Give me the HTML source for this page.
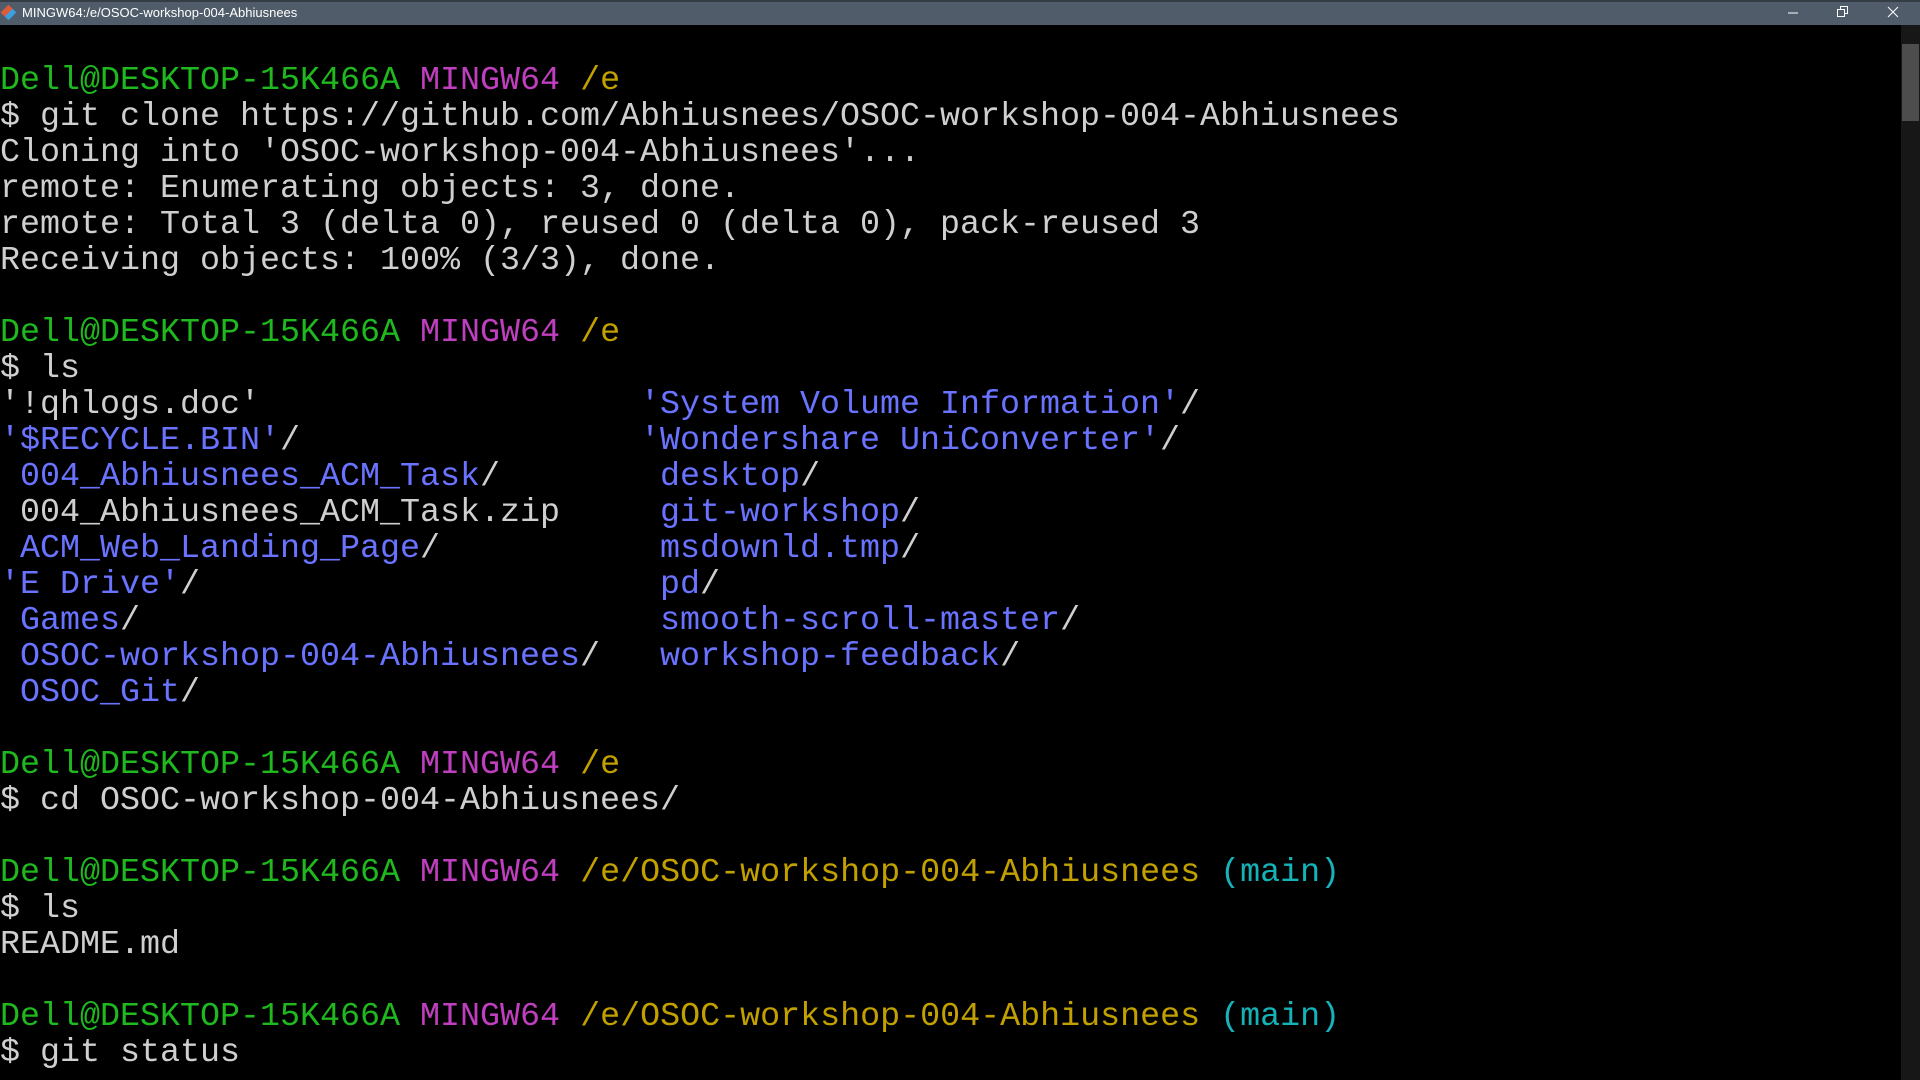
<!DOCTYPE html>
<html><head><meta charset="utf-8"><style>
html,body{margin:0;padding:0;background:#000;width:1920px;height:1080px;overflow:hidden}
#tb{position:absolute;left:0;top:0;width:1920px;height:25px;background:#505c6a;border-top:2px solid #343c46;box-sizing:border-box}
#tb .t{position:absolute;left:22px;top:3px;font:13px "Liberation Sans",sans-serif;color:#fff}
#tb .ic{position:absolute;left:3px;top:5px;width:11px;height:11px;transform:rotate(45deg);background:linear-gradient(90deg,#e05a3a 50%,#3aa0e0 50%)}
#scroll{position:absolute;left:1901px;top:25px;width:19px;height:1055px;background:#171717}
#thumb{position:absolute;left:1902px;top:44px;width:17px;height:77px;background:#4d4d4d}
pre{position:absolute;left:0;top:27px;margin:0;font-family:"Liberation Mono",monospace;font-size:33.35px;line-height:36px;color:#cfcfcf}
.g{color:#1fb81f}.m{color:#bf3fbf}.y{color:#c2a000}.b{color:#6a73ff}.c{color:#15b3b8}
</style></head><body>
<div id="tb"><div class="ic"></div><div class="t">MINGW64:/e/OSOC-workshop-004-Abhiusnees</div>
<svg style="position:absolute;left:1788px;top:6px" width="10" height="10"><line x1="0" y1="5" x2="10" y2="5" stroke="#fff"/></svg>
<svg style="position:absolute;left:1837px;top:4px" width="12" height="12" fill="none" stroke="#fff"><rect x="0.5" y="3.5" width="7" height="7"/><path d="M3.5 3.5V0.5H10.5V7.5H7.5"/></svg>
<svg style="position:absolute;left:1887px;top:4px" width="12" height="12" stroke="#fff"><path d="M1 1L11 11M11 1L1 11"/></svg>
</div>
<div id="scroll"></div><div id="thumb"></div>
<pre>

<span class="g">Dell@DESKTOP-15K466A</span> <span class="m">MINGW64</span> <span class="y">/e</span>
$ git clone https://github.com/Abhiusnees/OSOC-workshop-004-Abhiusnees
Cloning into 'OSOC-workshop-004-Abhiusnees'...
remote: Enumerating objects: 3, done.
remote: Total 3 (delta 0), reused 0 (delta 0), pack-reused 3
Receiving objects: 100% (3/3), done.

<span class="g">Dell@DESKTOP-15K466A</span> <span class="m">MINGW64</span> <span class="y">/e</span>
$ ls
'!qhlogs.doc'                   <span class="b">'System Volume Information'</span>/
<span class="b">'$RECYCLE.BIN'</span>/                 <span class="b">'Wondershare UniConverter'</span>/
 <span class="b">004_Abhiusnees_ACM_Task</span>/        <span class="b">desktop</span>/
 004_Abhiusnees_ACM_Task.zip     <span class="b">git-workshop</span>/
 <span class="b">ACM_Web_Landing_Page</span>/           <span class="b">msdownld.tmp</span>/
<span class="b">'E Drive'</span>/                       <span class="b">pd</span>/
 <span class="b">Games</span>/                          <span class="b">smooth-scroll-master</span>/
 <span class="b">OSOC-workshop-004-Abhiusnees</span>/   <span class="b">workshop-feedback</span>/
 <span class="b">OSOC_Git</span>/

<span class="g">Dell@DESKTOP-15K466A</span> <span class="m">MINGW64</span> <span class="y">/e</span>
$ cd OSOC-workshop-004-Abhiusnees/

<span class="g">Dell@DESKTOP-15K466A</span> <span class="m">MINGW64</span> <span class="y">/e/OSOC-workshop-004-Abhiusnees</span> <span class="c">(main)</span>
$ ls
README.md

<span class="g">Dell@DESKTOP-15K466A</span> <span class="m">MINGW64</span> <span class="y">/e/OSOC-workshop-004-Abhiusnees</span> <span class="c">(main)</span>
$ git status
</pre>
</body></html>
